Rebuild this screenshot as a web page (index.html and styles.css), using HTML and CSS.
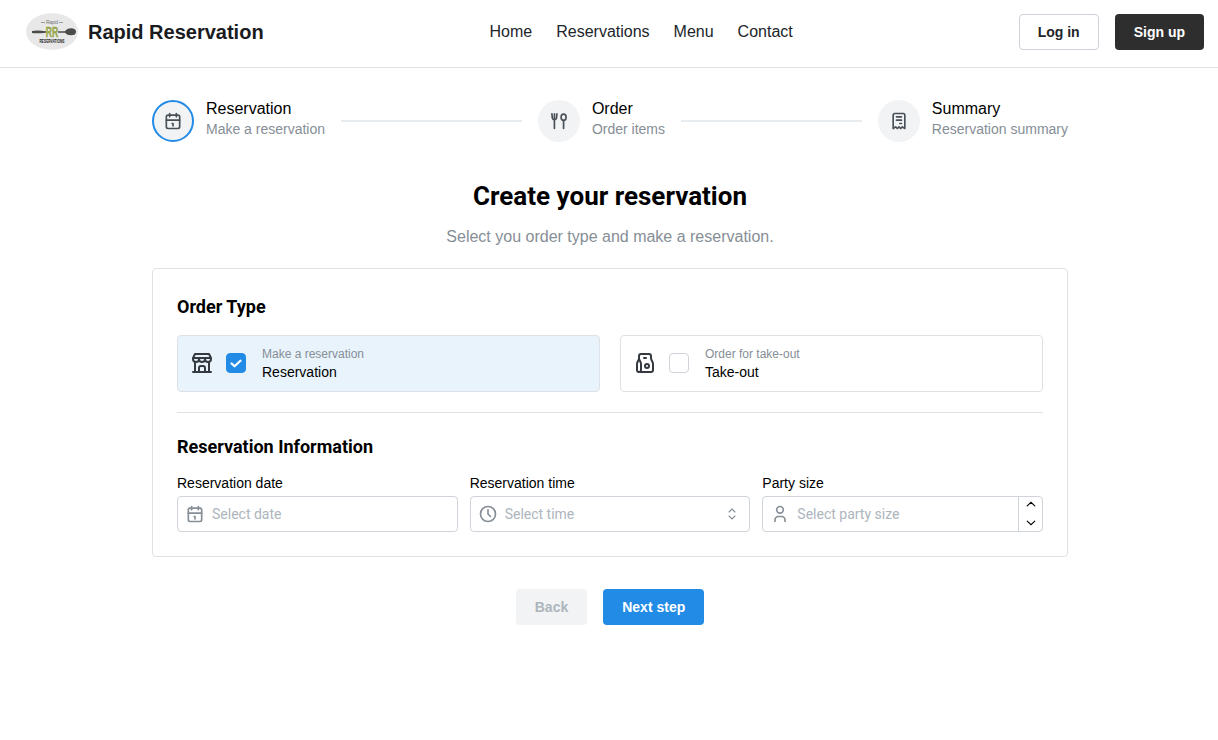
FILE: index.html
```html
<!DOCTYPE html>
<html lang="en">
<head>
<meta charset="utf-8">
<title>Rapid Reservation</title>
<link rel="stylesheet" href="styles.css">
</head>
<body>
<svg class="sprite" width="0" height="0" aria-hidden="true">
  <symbol id="calendar" viewBox="0 0 24 24"><rect x="4" y="5" width="16" height="16" rx="2"/><path d="M16 3v4M8 3v4M4 11h16M11 15h1M12 15v3"/></symbol>
  <symbol id="tools" viewBox="0 0 24 24"><ellipse cx="17.500" cy="7.500" rx="3" ry="3.800"/><path d="M17.500 11.500v9.500M6.500 12v9M3.500 3.500l.5 5a2.600 3 0 0 0 5 0l.5 -5M6.500 3.500v8"/></symbol>
  <symbol id="receipt" viewBox="0 0 24 24"><path d="M5 21v-16a2 2 0 0 1 2 -2h10a2 2 0 0 1 2 2v16l-3 -2l-2 2l-2 -2l-2 2l-2 -2l-3 2M9 7h6M9 11h6M13 15h2"/></symbol>
  <symbol id="store" viewBox="0 0 24 24"><path d="M3 21h18M3 7v1a3 3 0 0 0 6 0v-1m0 1a3 3 0 0 0 6 0v-1m0 1a3 3 0 0 0 6 0v-1h-18l2 -4h14l2 4M5 21v-10.150M19 21v-10.150M9 21v-4a2 2 0 0 1 2 -2h2a2 2 0 0 1 2 2v4"/></symbol>
  <symbol id="bag" viewBox="0 0 24 24"><path d="M8 3h8a2 2 0 0 1 2 2v1.820a5 5 0 0 0 .528 2.236l.944 1.888a5 5 0 0 1 .528 2.236v5.820a2 2 0 0 1 -2 2h-12a2 2 0 0 1 -2 -2v-5.820a5 5 0 0 1 .528 -2.236l1.472 -2.944v-3a2 2 0 0 1 2 -2z"/><circle cx="14" cy="15" r="2"/><path d="M6 21a2 2 0 0 0 2 -2v-5.820a5 5 0 0 0 -.528 -2.236l-1.472 -2.944M11 7h2"/></symbol>
  <symbol id="clock" viewBox="0 0 24 24"><circle cx="12" cy="12" r="9"/><path d="M12 7v5l3 3"/></symbol>
  <symbol id="user" viewBox="0 0 24 24"><circle cx="12" cy="7" r="4"/><path d="M6 21v-2a4 4 0 0 1 4 -4h4a4 4 0 0 1 4 4v2"/></symbol>
</svg>

<header class="header">
  <div class="brand">
    <svg class="logo" viewBox="0 0 52 37">
      <ellipse class="logo-bg" cx="26" cy="18.500" rx="26" ry="18.300"/>
      <path class="logo-rule" d="M15 9.500h4M33 9.500h4"/>
      <text class="logo-small" x="26" y="11" textLength="12">Rapid</text>
      <path class="logo-metal" d="M6 18q5-1 14 .2v1.500q-9 1-14 .3z"/>
      <path class="logo-metal" d="M32 18.200h7q2-3 6-3 5 0 5 3.500t-5 3.500q-4 0-6-2.500h-7z"/>
      <text class="logo-mark" x="26" y="24.200" textLength="12.500" lengthAdjust="spacingAndGlyphs">RR</text>
      <text class="logo-name" x="26" y="30" textLength="25" lengthAdjust="spacingAndGlyphs">RESERVATIONS</text>
    </svg>
    <span class="brand-name">Rapid Reservation</span>
  </div>
  <nav class="nav"><a>Home</a><a>Reservations</a><a>Menu</a><a>Contact</a></nav>
  <div class="auth">
    <button class="btn btn-outline">Log in</button>
    <button class="btn btn-dark">Sign up</button>
  </div>
</header>

<main class="main">
  <div class="stepper">
    <div class="step">
      <span class="step-icon step-active"><svg class="icon icon-step"><use href="#calendar"/></svg></span>
      <div><div class="step-label">Reservation</div><div class="step-desc">Make a reservation</div></div>
    </div>
    <span class="step-line"></span>
    <div class="step">
      <span class="step-icon"><svg class="icon icon-step"><use href="#tools"/></svg></span>
      <div><div class="step-label">Order</div><div class="step-desc">Order items</div></div>
    </div>
    <span class="step-line"></span>
    <div class="step">
      <span class="step-icon"><svg class="icon icon-step"><use href="#receipt"/></svg></span>
      <div><div class="step-label">Summary</div><div class="step-desc">Reservation summary</div></div>
    </div>
  </div>

  <h1 class="title">Create your reservation</h1>
  <p class="subtitle">Select you order type and make a reservation.</p>

  <section class="card">
    <h2 class="heading">Order Type</h2>
    <div class="types">
      <div class="type type-selected">
        <svg class="icon icon-type"><use href="#store"/></svg>
        <span class="check check-on"><svg class="tick" viewBox="0 0 10 7"><path d="M1.300 3.500l2.500 2.300 4.900-4.600"/></svg></span>
        <div><div class="type-desc">Make a reservation</div><div class="type-name">Reservation</div></div>
      </div>
      <div class="type">
        <svg class="icon icon-type"><use href="#bag"/></svg>
        <span class="check"></span>
        <div><div class="type-desc">Order for take-out</div><div class="type-name">Take-out</div></div>
      </div>
    </div>
    <hr class="divider">
    <h2 class="heading">Reservation Information</h2>
    <div class="fields">
      <div class="field">
        <div class="label">Reservation date</div>
        <div class="input"><svg class="icon icon-input"><use href="#calendar"/></svg><span class="placeholder">Select date</span></div>
      </div>
      <div class="field">
        <div class="label">Reservation time</div>
        <div class="input"><svg class="icon icon-input"><use href="#clock"/></svg><span class="placeholder">Select time</span>
          <svg class="selector" viewBox="0 0 8 12"><path d="M1 4l3-3 3 3M1 8l3 3 3-3"/></svg></div>
      </div>
      <div class="field">
        <div class="label">Party size</div>
        <div class="input"><svg class="icon icon-input"><use href="#user"/></svg><span class="placeholder">Select party size</span>
          <div class="spin">
            <svg class="chevron" viewBox="0 0 10 6"><path d="M1.200 4.900l3.800-3.600 3.800 3.600"/></svg>
            <svg class="chevron" viewBox="0 0 10 6"><path d="M1.200 1.100l3.800 3.600 3.800-3.600"/></svg>
          </div></div>
      </div>
    </div>
  </section>

  <div class="actions">
    <button class="btn btn-disabled" disabled>Back</button>
    <button class="btn btn-primary">Next step</button>
  </div>
</main>
</body>
</html>
```
FILE: styles.css
```css
* { box-sizing: border-box; }
body { margin: 0; background: #fff; color: #000; font: 16px/1.55 "Liberation Sans", Arial, sans-serif; }
.sprite { position: absolute; }
.header { display: flex; justify-content: space-between; height: 68px; padding: 13px 14px 0 26px; border-bottom: 1px solid #dee2e6; align-items: flex-start; }
.brand { display: flex; gap: 10px; height: 37px; align-items: center; }
.logo { width: 52px; height: 37px; }
.logo-bg { fill: #e8e8e8; }
.logo-rule { stroke: #888; stroke-width: .8; }
.logo-metal { fill: #4b4b49; }
.logo text { text-anchor: middle; font-family: "Liberation Sans", Arial, sans-serif; }
.logo .logo-small { font-size: 5px; fill: #777; }
.logo .logo-mark { font-size: 15px; font-weight: 700; fill: #98a648; stroke: #98a648; stroke-width: .4; }
.logo .logo-name { font-size: 5px; font-weight: 700; fill: #222; }
.brand-name { font-size: 20px; font-weight: 700; line-height: 30px; color: #1a1b1e; white-space: nowrap; }
.nav { display: flex; gap: 24px; padding-top: 6px; color: #212529; line-height: 25px; }
.auth { display: flex; gap: 16px; padding-top: 1px; }
.btn { height: 36px; padding: 0 18px; border: 1px solid transparent; border-radius: 4px; font: 700 14px/1 "Liberation Sans", Arial, sans-serif; white-space: nowrap; }
.btn-outline { background: #fff; border-color: #ced4da; color: #212529; }
.btn-dark { background: #2e2e2e; color: #fff; }
.btn-disabled { background: #f1f3f5; color: #adb5bd; }
.btn-primary { background: #228be6; color: #fff; }
.main { width: 916px; margin: 0 0 0 152px; padding-top: 32px; }
.icon { fill: none; stroke: currentColor; stroke-width: 2; stroke-linecap: round; stroke-linejoin: round; flex: none; }
.stepper { display: flex; align-items: center; height: 42px; }
.step { display: flex; gap: 12px; }
.step-icon { display: flex; align-items: center; justify-content: center; width: 42px; height: 42px; border-radius: 50%; background: #f1f3f5; color: #495057; }
.step-active { border: 2px solid #228be6; }
.icon-step { width: 20px; height: 20px; }
.step-label { height: 17px; line-height: 17px; white-space: nowrap; }
.step-desc { margin-top: 5px; font-size: 14px; line-height: 14px; color: #868e96; white-space: nowrap; }
.step-line { flex: 1; height: 2px; margin: 0 16px; background: #e9ecef; }
.title, .heading { margin: 0; font-family: Roboto, sans-serif; font-weight: 700; }
.title { margin-top: 36px; font-size: 26px; line-height: 36px; text-align: center; }
.subtitle { margin: 10px 0 0; line-height: 25px; text-align: center; color: #868e96; }
.card { height: 289px; margin-top: 19px; padding: 24px; border: 1px solid #dee2e6; border-radius: 4px; }
.heading { font-size: 18px; line-height: 28px; }
.types { display: grid; grid-template-columns: 1fr 1fr; gap: 20px; margin-top: 14px; }
.type { display: flex; align-items: center; height: 57px; padding: 0 12px 1px; border: 1px solid #dee2e6; border-radius: 4px; }
.type-selected { background: #e8f3fc; }
.icon-type { width: 24px; height: 24px; color: #343a40; }
.check { display: flex; align-items: center; justify-content: center; width: 20px; height: 20px; margin: 0 16px 0 12px; border: 1px solid #ced4da; border-radius: 4px; background: #fff; }
.check-on { background: #228be6; border-color: #228be6; }
.tick { width: 12px; height: 9px; fill: none; stroke: #fff; stroke-width: 1.9; stroke-linecap: round; stroke-linejoin: round; flex: none; }
.type-desc { margin-bottom: 2px; font-size: 12px; line-height: 18px; color: #868e96; }
.type-name { margin-bottom: 2px; font-size: 14px; line-height: 14px; }
.divider { height: 1px; margin: 20px 0; border: 0; background: #dee2e6; }
.fields { display: grid; grid-template-columns: repeat(3, 1fr); gap: 12px; margin-top: 11px; }
.label { height: 24px; font-size: 14px; line-height: 22px; }
.input { display: flex; align-items: center; height: 36px; padding-left: 7px; border: 1px solid #ced4da; border-radius: 4px; }
.icon-input { width: 20px; height: 20px; color: #868e96; }
.placeholder { flex: 1; margin-left: 7px; font: 14px/20px Roboto, sans-serif; color: #adb5bd; }
.selector { width: 8px; height: 12px; margin-right: 13px; fill: none; stroke: #868e96; stroke-width: 1.1; stroke-linecap: round; }
.spin { display: flex; flex-direction: column; justify-content: space-between; align-items: center; width: 24px; height: 34px; padding: 4px 0 5px 1px; border-left: 1px solid #ced4da; }
.chevron { width: 10px; height: 6px; fill: none; stroke: #000; stroke-width: 1.1; stroke-linecap: round; }
.actions { display: flex; gap: 16px; justify-content: center; margin-top: 32px; }
```
